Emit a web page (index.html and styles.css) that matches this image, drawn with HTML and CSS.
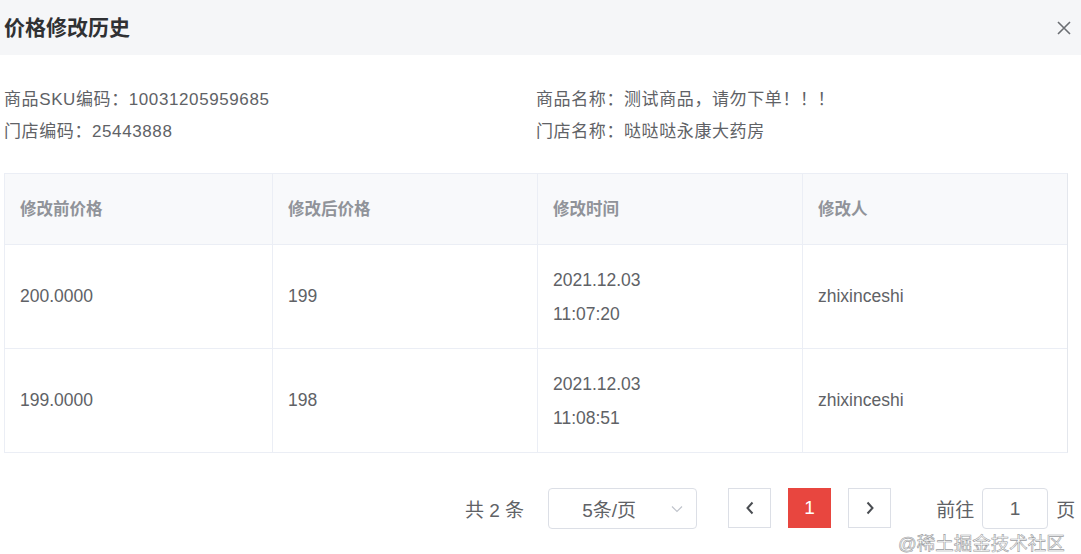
FILE: index.html
```html
<!DOCTYPE html>
<html lang="zh">
<head>
<meta charset="utf-8">
<title>价格修改历史</title>
<link rel="stylesheet" href="styles.css">
</head>
<body>
<div class="dialog">
  <div class="header">
    <span class="title">价格修改历史</span>
    <svg class="close" width="14" height="14" viewBox="0 0 14 14"><path d="M1 1L13 13M13 1L1 13" stroke="#6b6e73" stroke-width="1.6" fill="none"/></svg>
  </div>
  <div class="info">
    <div>商品SKU编码：10031205959685</div>
    <div>商品名称：测试商品，请勿下单！！！</div>
    <div>门店编码：25443888</div>
    <div>门店名称：哒哒哒永康大药房</div>
  </div>
  <div class="table">
    <div class="row head">
      <div class="cell">修改前价格</div>
      <div class="cell">修改后价格</div>
      <div class="cell">修改时间</div>
      <div class="cell">修改人</div>
    </div>
    <div class="row">
      <div class="cell">200.0000</div>
      <div class="cell">199</div>
      <div class="cell date"><span>2021.12.03</span><span>11:07:20</span></div>
      <div class="cell">zhixinceshi</div>
    </div>
    <div class="row">
      <div class="cell">199.0000</div>
      <div class="cell">198</div>
      <div class="cell date"><span>2021.12.03</span><span>11:08:51</span></div>
      <div class="cell">zhixinceshi</div>
    </div>
  </div>
  <div class="pager">
    <span class="total">共 2 条</span>
    <div class="select"><span>5条/页</span><svg width="12" height="8" viewBox="0 0 12 8"><path d="M1 1.5L6 6.5L11 1.5" stroke="#c0c4cc" stroke-width="1.2" fill="none"/></svg></div>
    <div class="btns">
      <div class="btn"><svg width="10" height="14" viewBox="0 0 10 14"><path d="M7.5 1.5L2.5 7L7.5 12.5" stroke="#4a4d52" stroke-width="2" fill="none"/></svg></div>
      <div class="btn active">1</div>
      <div class="btn"><svg width="10" height="14" viewBox="0 0 10 14"><path d="M2.5 1.5L7.5 7L2.5 12.5" stroke="#4a4d52" stroke-width="2" fill="none"/></svg></div>
    </div>
    <span class="goto">前往</span>
    <div class="jump">1</div>
    <span class="page">页</span>
  </div>
  <div class="watermark">@稀土掘金技术社区</div>
</div>
</body>
</html>
```

FILE: styles.css
```css
* { box-sizing: border-box; }
html, body { margin: 0; padding: 0; background: #fff; }
body {
  font-family: "Liberation Sans", "Noto Sans CJK SC", sans-serif;
  color: #606266;
  width: 1081px;
  height: 554px;
  overflow: hidden;
}
.dialog { position: relative; height: 554px; }
.header {
  height: 55px;
  background: #f5f6f8;
  display: flex;
  align-items: center;
  justify-content: space-between;
  padding: 0 10px 4px 4px;
}
.title {
  font-size: 21px;
  font-weight: bold;
  color: #303133;
}
.close { margin-top: 4px; }
.info {
  display: grid;
  grid-template-columns: 532px 1fr;
  padding: 29px 0 0 4px;
  font-size: 17px;
  letter-spacing: 0.6px;
  line-height: 32px;
  color: #606266;
}
.table {
  margin: 25px 13px 0 4px;
  border: 1px solid #ebeef5;
  border-right: 1px solid #e4e7ed;
}
.row {
  display: grid;
  grid-template-columns: 267px 265px 265px 1fr;
  height: 104px;
  border-top: 1px solid #ebeef5;
}
.row.head {
  height: 70px;
  border-top: none;
  background: #f8f9fb;
  color: #909399;
  font-weight: bold;
}
.row.head .cell { font-size: 16.5px; padding-bottom: 3px; }
.cell {
  display: flex;
  align-items: center;
  padding-left: 15px;
  font-size: 17.5px;
  border-left: 1px solid #ebeef5;
}
.cell:first-child { border-left: none; }
.cell.date {
  flex-direction: column;
  align-items: flex-start;
  justify-content: center;
  line-height: 34px;
}
.pager {
  display: flex;
  align-items: center;
  padding: 35px 0 0 465px;
  font-size: 19px;
  color: #606266;
}
.total { margin-right: 24px; }
.select {
  width: 149px;
  height: 41px;
  border: 1px solid #dcdfe6;
  border-radius: 4px;
  display: flex;
  align-items: center;
  justify-content: space-between;
  padding: 0 13px 0 33px;
  margin-right: 31px;
}
.btns { display: flex; gap: 17px; align-items: center; margin-top: -2px; }
.btn {
  width: 43px;
  height: 40px;
  border: 1px solid #dcdfe6;
  display: flex;
  align-items: center;
  justify-content: center;
  background: #fff;
  font-size: 19px;
}
.btn.active {
  background: #e8463f;
  border-color: #e8463f;
  color: #fff;
}
.goto { margin-left: 45px; margin-right: 8px; }
.jump {
  width: 66px;
  height: 41px;
  border: 1px solid #dcdfe6;
  border-radius: 4px;
  display: flex;
  align-items: center;
  justify-content: center;
  margin-right: 8px;
}
.watermark {
  position: absolute;
  left: 898px;
  top: 534px;
  font-size: 18.5px;
  line-height: 19px;
  color: #fff;
  -webkit-text-stroke: 0.6px #9a9ca0;
}
```
